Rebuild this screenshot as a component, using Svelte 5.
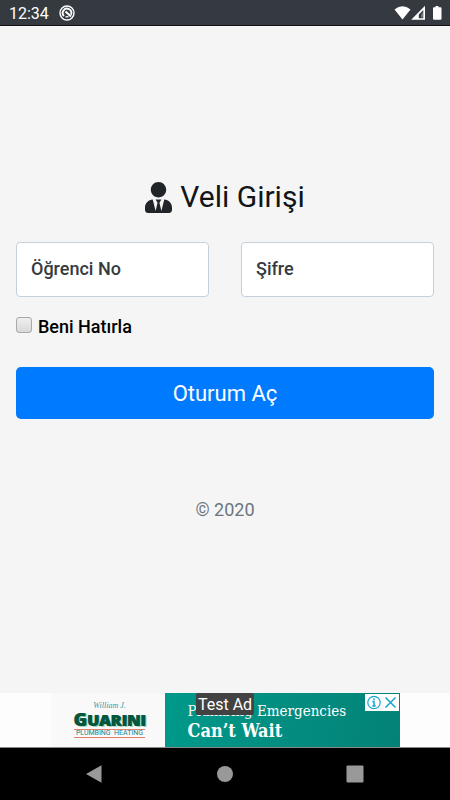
<script>
  let studentNo = $state('');
  let password = $state('');
  let remember = $state(false);
</script>

<div class="screen">
  <header class="status">
    <span class="time">12:34</span>
    <svg width="16" height="16" viewBox="0 0 16 16" aria-hidden="true">
      <circle cx="8" cy="8" r="7" fill="none" stroke="#fff" stroke-width="1.4" />
      <path d="M5 11A4.300 4.300 0 1 1 12 9.600" fill="none" stroke="#fff" stroke-width="1.900" />
      <path d="M6.500 6.500 12 11.500" fill="none" stroke="#fff" stroke-width="2.200" />
      <path d="M6.500 11.800H9.500" fill="none" stroke="#fff" stroke-width="1.300" />
    </svg>
    <span class="spacer"></span>
    <svg class="signals" width="50" height="16" viewBox="0 0 50 16" aria-hidden="true">
      <path d="M.5 4.400Q8.500-2 16.500 4.400L8.500 14.500Z" fill="#fff" />
      <path fill-rule="evenodd" d="M31 .8V14.800H17.200ZM29.300 5V13.200H24.800V9.600Z" fill="#fff" />
      <path d="M27 9.500 29 7V12.500H27Z" fill="#fff" opacity=".3" />
      <path d="M41.500 1H44.500V2.300H46.500Q47.500 2.300 47.500 3.300V13.800Q47.500 14.800 46.500 14.800H40Q39 14.800 39 13.800V3.300Q39 2.300 40 2.300H41.500Z" fill="#fff" />
    </svg>
  </header>

  <main>
    <form onsubmit={(e) => e.preventDefault()}>
      <h1>
        <svg width="27" height="31" viewBox="0 0 448 512" aria-hidden="true">
          <path fill="#212529" d="M224 256c70.700 0 128-57.300 128-128S294.700 0 224 0 96 57.300 96 128s57.300 128 128 128zm95.800 32.600L272 480l-32-136 32-56h-96l32 56-32 136-47.800-191.400C56.900 292 0 350.300 0 422.400V464c0 26.500 21.500 48 48 48h352c26.500 0 48-21.500 48-48v-41.600c0-72.100-56.900-130.400-128.200-133.800z" />
        </svg>
        <span>Veli Girişi</span>
      </h1>

      <div class="fields">
        <div class="field">
          <input id="student" type="text" bind:value={studentNo} />
          <label for="student" class:filled={studentNo}>Öğrenci No</label>
        </div>
        <div class="field">
          <input id="password" type="password" bind:value={password} />
          <label for="password" class:filled={password}>Şifre</label>
        </div>
      </div>

      <label class="remember">
        <input type="checkbox" bind:checked={remember} />
        <span>Beni Hatırla</span>
      </label>

      <button class="submit" type="submit">Oturum Aç</button>
      <p class="copyright">© 2020</p>
    </form>
  </main>

  <aside class="ad">
    <div class="banner">
      <div class="brand">
        <span class="owner">William J.</span>
        <span class="name"><b>G</b>UARINI</span>
        <span class="trade">PLUMBING&nbsp; HEATING</span>
      </div>
      <div class="message">
        <span class="line">Plumbing Emergencies</span>
        <span class="strong">Can’t Wait</span>
      </div>
      <span class="test">Test Ad</span>
      <div class="choices">
        <button type="button" aria-label="Ad information">
          <svg width="16" height="15" viewBox="0 0 16 15">
            <circle cx="8" cy="7.500" r="6.200" fill="none" stroke="#14a5cb" stroke-width="1.200" />
            <path d="M8 3.300V5M6.300 6.500H8V11M6.300 11H9.700" fill="none" stroke="#14a5cb" stroke-width="1.500" />
          </svg>
        </button>
        <button type="button" aria-label="Close ad">
          <svg width="15" height="15" viewBox="0 0 15 15">
            <path d="M2.500 2.500 12.500 12.500M12.500 2.500 2.500 12.500" fill="none" stroke="#14a5cb" stroke-width="1.500" />
          </svg>
        </button>
      </div>
    </div>
  </aside>

  <nav>
    <button type="button" aria-label="Back">
      <svg width="18" height="18" viewBox="0 0 18 18"><path d="M0 9 15.500.2V17.800Z" fill="#999" /></svg>
    </button>
    <button type="button" aria-label="Home">
      <svg width="18" height="18" viewBox="0 0 18 18"><circle cx="9" cy="9" r="8" fill="#999" /></svg>
    </button>
    <button type="button" aria-label="Recent apps">
      <svg width="18" height="18" viewBox="0 0 18 18"><rect x=".5" y=".5" width="17" height="17" rx="1" fill="#999" /></svg>
    </button>
  </nav>
</div>

<style>
  :global(body) {
    margin: 0;
    background: #f5f5f5;
  }
  .screen {
    display: flex;
    flex-direction: column;
    min-height: 100vh;
    font-family: Roboto, "Liberation Sans", sans-serif;
    color: #111518;
  }
  .screen * {
    box-sizing: border-box;
  }
  svg {
    display: block;
    flex: none;
  }
  button {
    font: inherit;
    border: 0;
    padding: 0;
    background: none;
    cursor: pointer;
  }
  .status {
    display: flex;
    align-items: center;
    height: 26px;
    padding: 0 6px 0 9px;
    gap: 10px;
    background: #343a40;
    border-bottom: 1px solid #111;
    color: #fff;
  }
  .time {
    font-size: 16px;
    line-height: 24px;
    padding-top: 2px;
  }
  .spacer {
    flex: 1;
  }
  main {
    flex: 1;
    display: flex;
    align-items: center;
    padding: 0 16px;
  }
  form {
    flex: 1;
    min-width: 0;
  }
  h1 {
    display: flex;
    align-items: center;
    justify-content: center;
    gap: 8px;
    margin: 0 0 27px;
    font-size: 30px;
    line-height: 36px;
    font-weight: 400;
  }
  .fields {
    display: grid;
    grid-template-columns: 1fr 1fr;
    gap: 32px;
  }
  .field {
    position: relative;
  }
  .field input {
    display: block;
    width: 100%;
    height: 55px;
    padding: 0 14px;
    border: 1px solid #c6d0da;
    border-radius: 4px;
    background: #fff;
    font: 18px Roboto, sans-serif;
  }
  .field label {
    position: absolute;
    left: 15px;
    top: 0;
    font-size: 18px;
    line-height: 54px;
    font-weight: 500;
    color: #343a40;
    pointer-events: none;
  }
  .field label.filled {
    visibility: hidden;
  }
  .remember {
    display: flex;
    align-items: center;
    gap: 6px;
    width: fit-content;
    margin: 18px 0 28px;
    font-size: 18px;
    line-height: 24px;
    font-weight: 500;
    color: #000;
  }
  .remember input {
    appearance: none;
    width: 16px;
    height: 16px;
    margin: 0 0 4px;
    border: 1px solid #aaa;
    border-radius: 3px;
    background: linear-gradient(#eee, #d9d9d9);
  }
  .remember input:checked {
    background: #007bff;
  }
  .submit {
    display: block;
    width: 100%;
    height: 52px;
    border-radius: 5px;
    background: #007bff;
    color: #fff;
    font-size: 22px;
  }
  .copyright {
    margin: 78px 0 17px;
    text-align: center;
    font-size: 18px;
    line-height: 26px;
    color: #6c757d;
  }
  .ad {
    display: flex;
    justify-content: center;
    height: 55px;
    background: #fdfdfd;
    border-bottom: 1px solid #888;
  }
  .banner {
    position: relative;
    display: flex;
    width: 349px;
  }
  .brand {
    display: flex;
    flex-direction: column;
    align-items: center;
    justify-content: center;
    width: 114px;
    padding: 0 0 0 4px;
    background: #f9f9f9;
    white-space: nowrap;
  }
  .owner {
    font: italic 8px/8px "Liberation Serif", serif;
    color: #2a9db0;
  }
  .name {
    font: 800 16px/18px "Open Sans", sans-serif;
    color: #04573e;
    text-shadow: 1px 0 #04573e, 2px 1px #9fd6b8;
  }
  .name b {
    font-size: 18px;
    line-height: 18px;
  }
  .trade {
    border-top: 1px solid #e0806c;
    border-bottom: 1px solid #e0806c;
    font-size: 7px;
    line-height: 7px;
    padding: 0 2px;
    color: #16828c;
  }
  .message {
    flex: 1;
    display: flex;
    flex-direction: column;
    padding: 8px 0 0 23px;
    background: linear-gradient(100deg, #00998a, #048277);
    color: #fff;
    white-space: nowrap;
    font-family: "DejaVu Serif Condensed", "DejaVu Serif", serif;
  }
  .line {
    font-size: 15px;
    line-height: 20px;
  }
  .strong {
    font-size: 18px;
    line-height: 20px;
    font-weight: 700;
  }
  .test {
    position: absolute;
    top: 0;
    left: 50%;
    transform: translateX(-50%);
    padding: 2px 2px 0;
    border-radius: 2px;
    background: #424242;
    color: #fff;
    font-size: 16px;
    line-height: 20px;
    white-space: nowrap;
  }
  .choices {
    position: absolute;
    top: 1px;
    right: 1px;
    display: flex;
    gap: 1px;
    padding: 1px;
    background: #fff;
  }
  nav {
    display: flex;
    justify-content: space-around;
    align-items: center;
    height: 52px;
    padding: 0 30px;
    background: #000;
  }
  nav button {
    padding: 8px;
  }
</style>
